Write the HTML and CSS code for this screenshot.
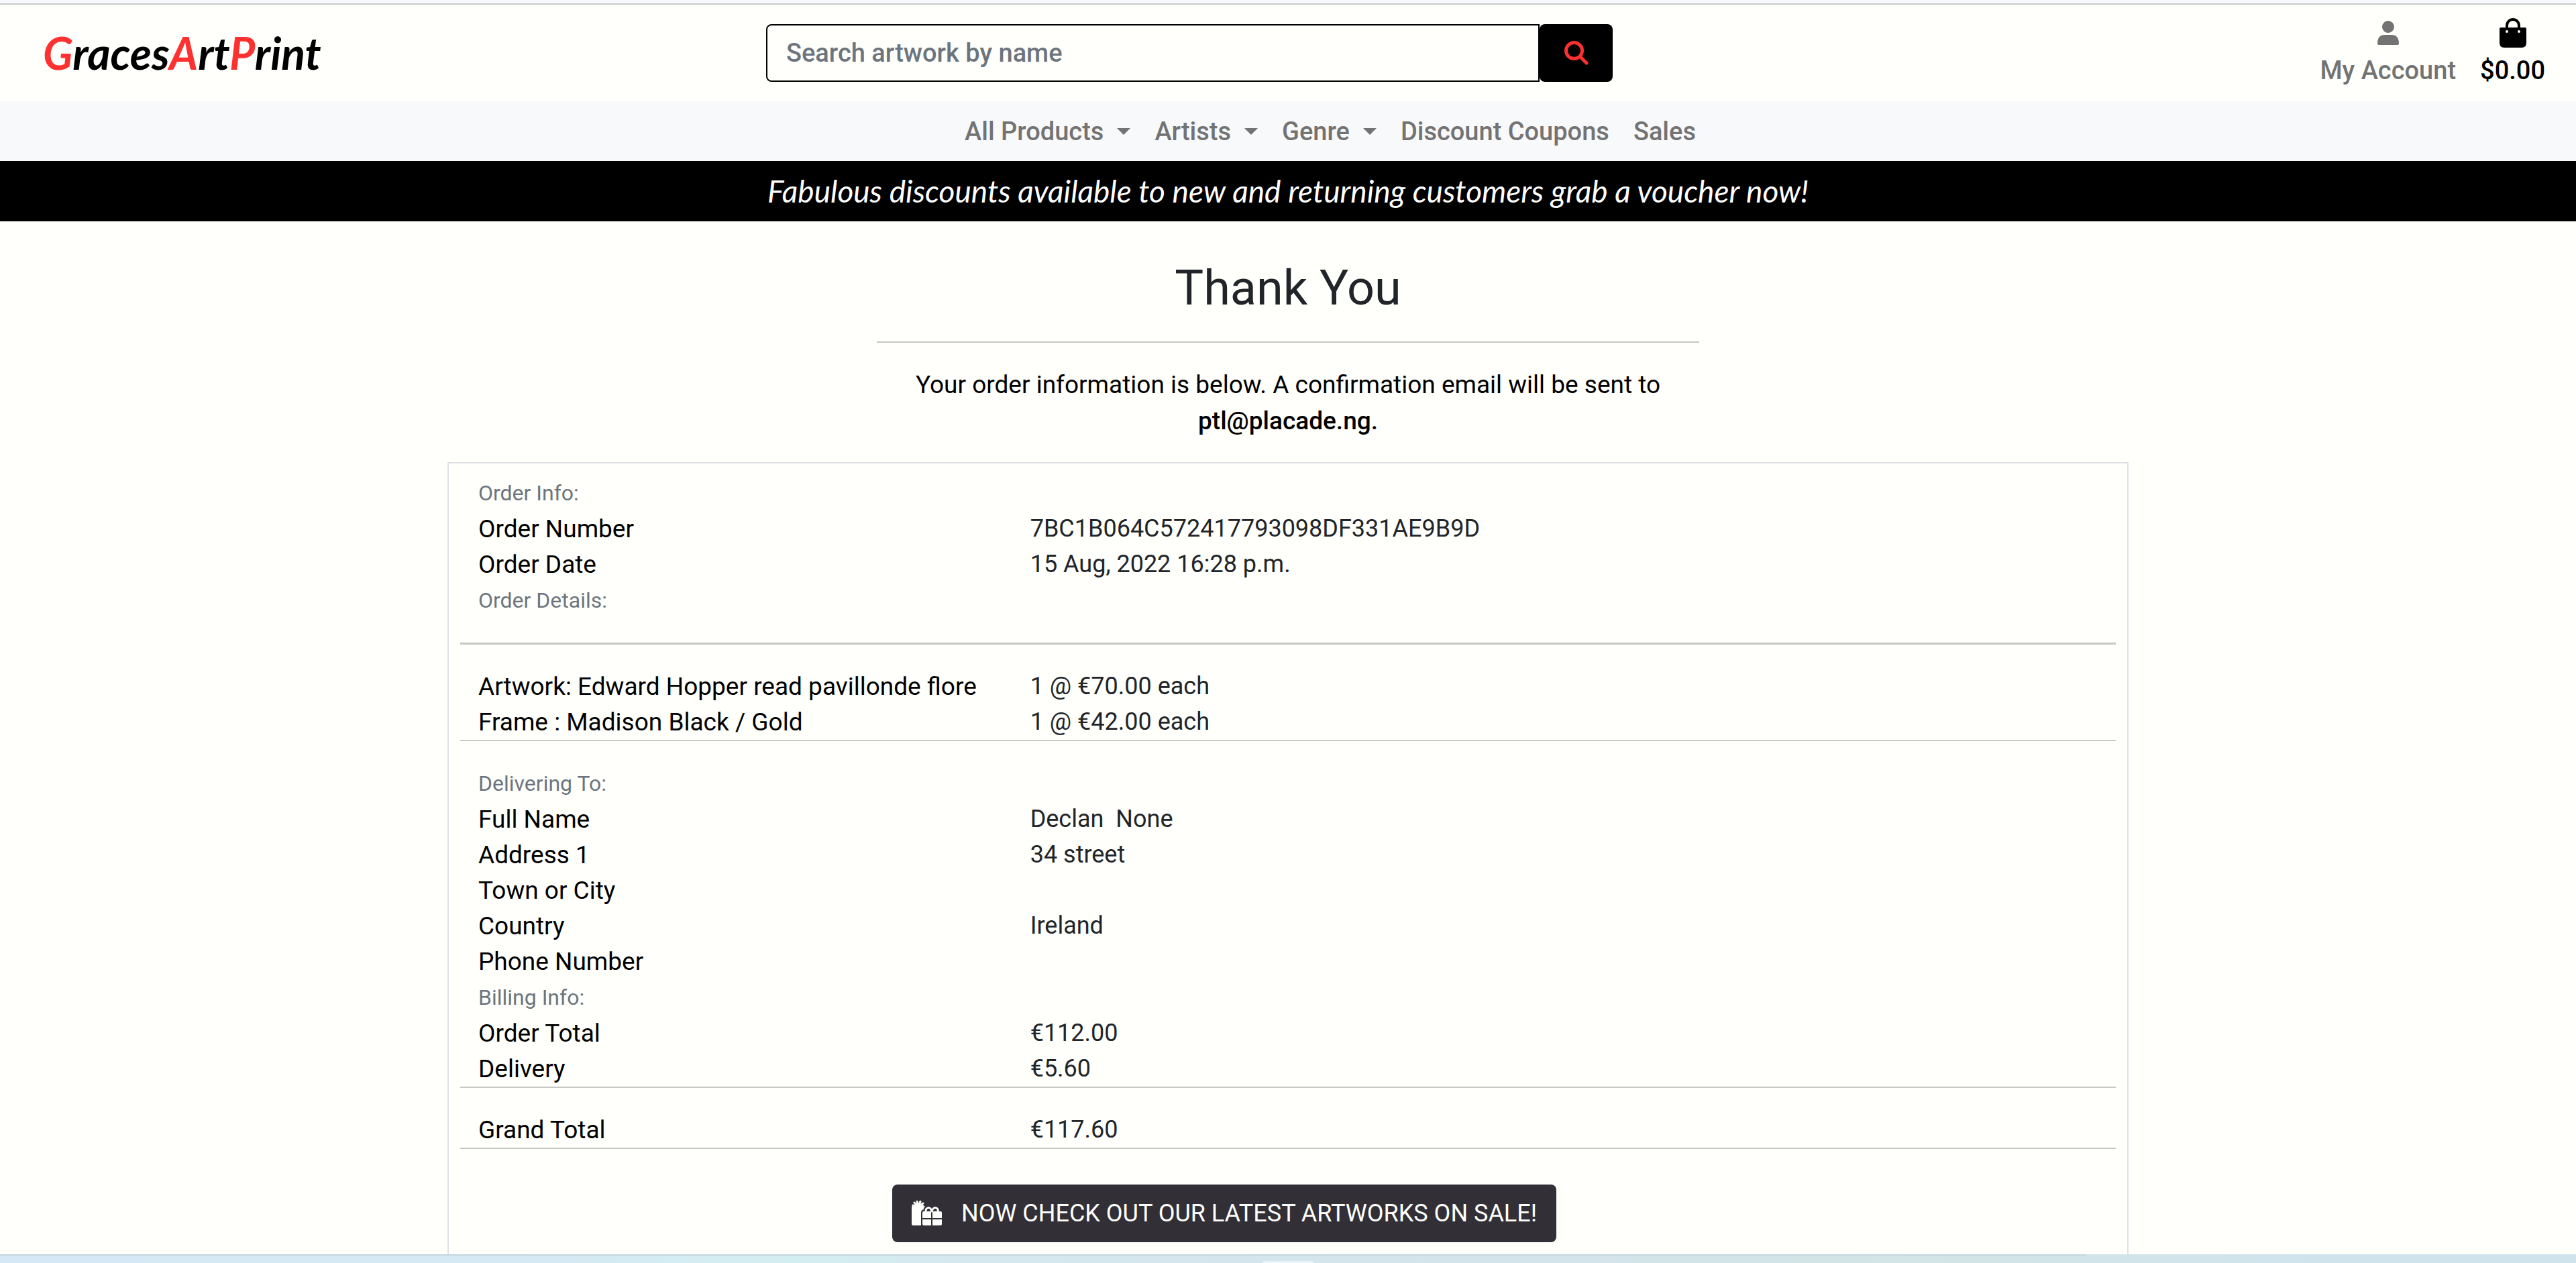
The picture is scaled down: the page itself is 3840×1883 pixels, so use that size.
FILE: index.html
```html
<!DOCTYPE html>
<html lang="en">
<head>
<meta charset="utf-8">
<title>GracesArtPrint - Thank You</title>
<link rel="stylesheet" href="styles.css">
</head>
<body>
<header class="site-header">
  <a class="logo" href="#"><span class="logo-cap">G</span>races<span class="logo-cap">A</span>rt<span class="logo-cap">P</span>rint</a>
  <form class="search">
    <input class="search-input" type="text" placeholder="Search artwork by name" aria-label="Search artwork by name">
    <button class="search-button" type="button" aria-label="Search">
      <svg class="search-icon" viewBox="0 0 36 36" fill="none" stroke="currentColor" stroke-width="5" stroke-linecap="round"><circle cx="14.500" cy="14.500" r="12"/><path d="M24 24L33 33"/></svg>
    </button>
  </form>
  <div class="account-links">
    <a class="account-link" href="#">
      <svg class="user-icon" viewBox="0 0 32 38"><circle cx="16" cy="10" r="9" fill="currentColor"/><path fill="currentColor" d="M0 35Q0 22 11 22H21Q32 22 32 35Q32 37 30 37H2Q0 37 0 35Z"/></svg>
      <span>My Account</span>
    </a>
    <a class="account-link bag-link" href="#">
      <svg class="bag-icon" viewBox="0 0 40 46"><path fill="none" stroke="currentColor" stroke-width="4" d="M11 20V12A9 9 0 0 1 29 12V20"/><path fill="currentColor" d="M2 15H38Q40 15 40 17V38Q40 45 33 45H7Q0 45 0 38V17Q0 15 2 15Z"/><circle cx="11" cy="21" r="2" fill="#fffffc"/><circle cx="29" cy="21" r="2" fill="#fffffc"/></svg>
      <span>$0.00</span>
    </a>
  </div>
</header>
<nav class="main-nav">
  <a class="nav-link dropdown" href="#">All Products</a>
  <a class="nav-link dropdown" href="#">Artists</a>
  <a class="nav-link dropdown" href="#">Genre</a>
  <a class="nav-link" href="#">Discount Coupons</a>
  <a class="nav-link" href="#">Sales</a>
</nav>
<p class="banner">Fabulous discounts available to new and returning customers grab a voucher now!</p>
<main class="content">
  <section class="intro">
    <h1 class="title">Thank You</h1>
    <hr class="rule">
    <p class="message">Your order information is below. A confirmation email will be sent to <strong class="email">ptl@placade.ng.</strong></p>
  </section>
  <section class="order">
    <h2 class="group-label">Order Info:</h2>
    <dl class="rows">
      <dt>Order Number</dt><dd>7BC1B064C572417793098DF331AE9B9D</dd>
      <dt>Order Date</dt><dd>15 Aug, 2022 16:28 p.m.</dd>
    </dl>
    <h2 class="group-label">Order Details:</h2>
    <hr class="rule rule-heavy">
    <dl class="rows">
      <dt>Artwork: Edward Hopper read pavillonde flore</dt><dd>1 @ €70.00 each</dd>
      <dt>Frame : Madison Black / Gold</dt><dd>1 @ €42.00 each</dd>
    </dl>
    <hr class="rule rule-close">
    <h2 class="group-label">Delivering To:</h2>
    <dl class="rows">
      <dt>Full Name</dt><dd>Declan &nbsp;None</dd>
      <dt>Address 1</dt><dd>34 street</dd>
      <dt>Town or City</dt><dd></dd>
      <dt>Country</dt><dd>Ireland</dd>
      <dt>Phone Number</dt><dd></dd>
    </dl>
    <h2 class="group-label">Billing Info:</h2>
    <dl class="rows">
      <dt>Order Total</dt><dd>€112.00</dd>
      <dt>Delivery</dt><dd>€5.60</dd>
    </dl>
    <hr class="rule rule-close">
    <dl class="rows">
      <dt>Grand Total</dt><dd>€117.60</dd>
    </dl>
    <hr class="rule rule-close">
    <div class="actions">
      <a class="sale-button" href="#">
        <svg class="gift-icon" viewBox="0 0 46 38"><g fill="currentColor"><path d="M0 10Q0 7 4 7H18V13Q14 14 14 18V37H2Q0 37 0 35Z"/><circle cx="10" cy="9" r="6"/><path d="M16 18Q16 16 18 16H29V26H16ZM31 16H43Q45 16 45 18V26H31ZM16 28H29V37H18Q16 37 16 35ZM31 28H45V35Q45 37 43 37H31Z"/></g><g fill="none" stroke="currentColor" stroke-linecap="round"><path stroke-width="3" d="M10 9L2 7M10 9L4 3M10 9L8 1M10 9L13 1M10 9L17 4M10 9L18 9"/><path stroke-width="3" d="M21 17C20 9 29 8 30 17C31 8 41 9 39 17"/></g></svg>
        <span>NOW CHECK OUT OUR LATEST ARTWORKS ON SALE!</span>
      </a>
    </div>
  </section>
</main>
<footer class="bottom-edge"><span class="bottom-line"></span><span class="bottom-tab"></span></footer>
</body>
</html>
```
FILE: styles.css
```css
* { box-sizing: border-box; }
body {
  margin: 0;
  min-height: 100vh;
  display: flex;
  flex-direction: column;
  background: #fffffc;
  color: #212529;
  font: 400 36px/54px Roboto, "Liberation Sans", sans-serif;
}
a { color: inherit; text-decoration: none; }
h1, h2, p, dl, dd { margin: 0; font-weight: 400; }

.site-header {
  display: grid;
  grid-template-columns: 1078fr 1262px 1390fr;
  align-items: center;
  height: 151px;
  padding: 7px 46px 0 64px;
  background: linear-gradient(#f8f9fc 5px, #ccc 5px, #ccc 7px, #fffffc 7px);
}
.logo { color: #000; font: italic 700 66px/72px Lato, sans-serif; }
.logo-cap { color: #ff3030; }
.search { display: flex; height: 86px; }
.search-input {
  flex: 1;
  min-width: 0;
  padding: 0 28px;
  border: 2px solid #000;
  border-radius: 8px 0 0 8px;
  background: #fffffc;
  font: 500 38px/54px Roboto, sans-serif;
}
.search-input::placeholder { color: #6c757d; opacity: 1; }
.search-button {
  display: grid;
  place-items: center;
  width: 109px;
  border: 0;
  border-radius: 8px;
  background: #000;
  color: #ff3030;
}
.search-icon { width: 36px; height: 36px; }
.account-links { display: flex; justify-content: flex-end; gap: 36px; color: #737373; font-size: 38px; font-weight: 500; }
.account-link { display: flex; flex-direction: column; align-items: center; justify-content: flex-end; }
.bag-link { color: #000; }
.user-icon { width: 32px; height: 38px; margin-bottom: 10px; }
.bag-icon { width: 40px; height: 46px; margin-bottom: 6px; }

.main-nav {
  display: flex;
  justify-content: center;
  align-items: center;
  gap: 36px;
  height: 89px;
  padding-left: 126px;
  background: #f8f9fb;
  color: #737373;
  font-size: 38px;
  font-weight: 500;
}
.nav-link { display: flex; align-items: center; gap: 20px; }
.dropdown::after { content: ""; border: 10px solid transparent; border-top-color: currentColor; border-bottom: 0; }
.banner {
  background: #000;
  color: #fff;
  font: italic 400 46px/90px Lato, sans-serif;
  text-align: center;
}

.content { flex: 1; width: 2506px; max-width: 100%; margin: 0 auto; display: flex; flex-direction: column; }
.intro { width: 1226px; max-width: 100%; margin: 0 auto; padding: 57px 0 34px; color: #000; text-align: center; }
.title { color: #212529; font-size: 72px; line-height: 86px; }
.rule { width: 100%; height: 2px; margin: 36px 0; border: 0; background: #c7c7c5; }
.message { padding: 0 36px; font-size: 37px; }
.email { display: block; font-weight: 500; }
.order { flex: 1; padding: 17px 17px; border: 2px solid #dee2e6; border-bottom: 0; }
.group-label { padding: 0 27px; color: #6c757d; font-size: 32px; line-height: 54px; }
.rows { display: grid; grid-template-columns: 1fr 2fr; line-height: 53px; }
.rows dt { padding: 0 27px; color: #000; font-size: 37px; white-space: nowrap; }
.rows dd { padding: 0 27px; min-height: 53px; }
.rule-heavy { height: 3px; }
.rule-close { margin-top: 0; }
.actions { display: flex; justify-content: center; padding-top: 17px; padding-right: 190px; }
.sale-button {
  display: flex;
  align-items: center;
  gap: 28px;
  height: 86px;
  padding: 0 29px;
  border-radius: 8px;
  background: #323036;
  color: #fffffc;
}
.gift-icon { width: 46px; height: 38px; }
.bottom-edge {
  display: flex;
  flex-direction: column;
  justify-content: space-between;
  height: 13px;
  background: linear-gradient(90deg, #d4e9f5 0%, #d4e9f3 22%, #d3eef1 31%, #d5e7ef 38%, #d4e4eb 60%, #d3e5e6 75%, #cfe3ed 90%, #cfe3ed 100%);
}
.bottom-line { width: 81%; height: 2px; background: #c5d7df; }
.bottom-tab { align-self: center; width: 76px; height: 3px; border-radius: 3px 3px 0 0; background: #eaf4f9; }
```
